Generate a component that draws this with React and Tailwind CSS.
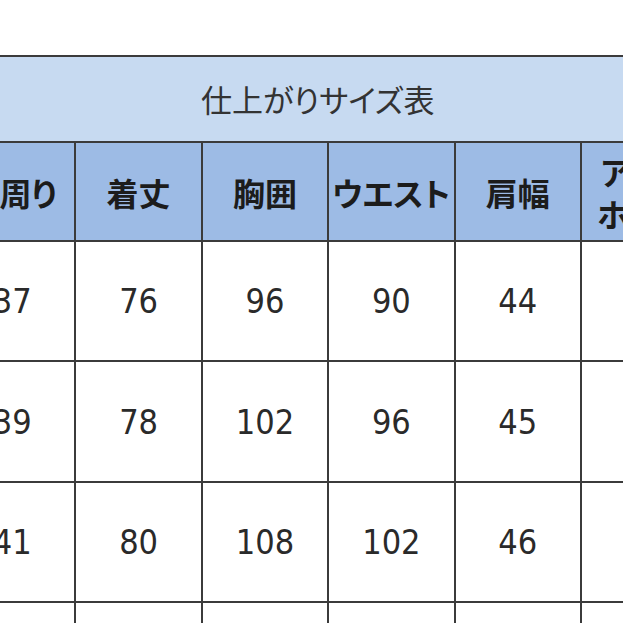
import React from 'react';

const HEADERS = ['首周り', '着丈', '胸囲', 'ウエスト', '肩幅', 'アーム\nホール', ''];

const ROWS = [
  ['37', '76', '96', '90', '44', '', ''],
  ['39', '78', '102', '96', '45', '', ''],
  ['41', '80', '108', '102', '46', '', ''],
  ['', '', '', '', '', '', ''],
];

const ROW_HEIGHTS = ['h-[118px]', 'h-[119px]', 'h-[118px]', 'h-[118px]'];

export default function App() {
  return (
    <div className="w-[623px] h-[623px] overflow-hidden bg-white pt-[55px]">
      {/* size table, its first column runs off the left edge */}
      <div className="ml-[-50px] w-max grid grid-cols-[repeat(7,124.4px)] gap-[2px] pt-[2px] bg-[#3b3b3b]">
        <div className="col-span-7 h-[84px] bg-[#c7daf1] flex items-center pl-[251px] pb-[2px] text-[31px] text-[#333] font-['Noto_Sans_CJK_JP',sans-serif] [font-feature-settings:'palt'] leading-none">
          仕上がりサイズ表
        </div>

        {HEADERS.map((h, i) => (
          <div
            key={'h' + i}
            className="h-[97px] bg-[#9dbbe5] flex items-center justify-center text-center whitespace-pre-line text-[32px] leading-[42px] font-bold text-[#1c1c1c] font-['Noto_Sans_CJK_JP',sans-serif] [font-feature-settings:'palt']"
          >
            {h}
          </div>
        ))}

        {ROWS.map((row, r) =>
          row.map((v, c) => (
            <div
              key={r + '-' + c}
              className={`${ROW_HEIGHTS[r]} bg-white flex items-center justify-center text-[34px] text-[#2a2a2a] font-['DejaVu_Sans_Condensed','DejaVu_Sans',sans-serif] leading-none`}
            >
              {v}
            </div>
          ))
        )}
      </div>
    </div>
  );
}
